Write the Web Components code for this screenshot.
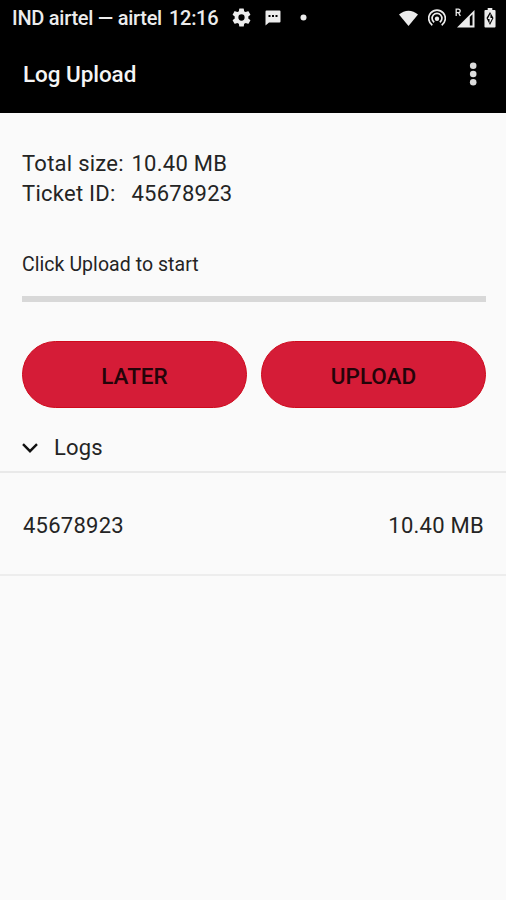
<!DOCTYPE html>
<html lang="en">
<head>
<meta charset="utf-8">
<title>Log Upload</title>
<style>
  body {
    margin: 0;
    background: #fafafa;
    color: #242424;
    font-family: Roboto, "Liberation Sans", sans-serif;
  }
</style>
</head>
<body>
<log-app></log-app>

<script>
class StatusBar extends HTMLElement {
  connectedCallback() {
    const root = this.attachShadow({ mode: 'open' });
    root.innerHTML = `
      <style>
        :host {
          display: flex;
          align-items: center;
          box-sizing: border-box;
          height: 36px;
          padding: 0 10px 1px 12px;
          background: #000;
          color: #ececec;
          font-size: 20px;
          font-weight: 500;
          line-height: 36px;
          white-space: nowrap;
        }

        .carrier { width: 157px; letter-spacing: -0.27px; }
        .time { width: 63px; letter-spacing: -0.3px; }
        svg { display: block; fill: currentColor; flex-shrink: 0; }
        .gear { margin-right: 14px; }
        .dot { margin-left: 19px; }
        .system { display: flex; align-items: center; margin-left: auto; }
        .wifi { margin-right: 10px; }
        .hotspot { margin-right: 9px; }
        .signal { margin-right: 9px; }
      </style>
      <span class="carrier">IND airtel — airtel</span>
      <span class="time">12:16</span>
      <svg class="gear" width="19" height="19" viewBox="2 2 20 20"><path d="M19.14 12.94c.04-.3.06-.61.06-.94s-.02-.64-.07-.94l2.03-1.58a.49.49 0 0 0 .12-.61l-1.92-3.32a.49.49 0 0 0-.59-.22l-2.39.96a7 7 0 0 0-1.62-.94l-.36-2.54a.48.48 0 0 0-.48-.41h-3.84a.48.48 0 0 0-.47.41l-.36 2.54c-.59.24-1.13.57-1.62.94l-2.39-.96a.48.48 0 0 0-.59.22L2.74 8.87a.48.48 0 0 0 .12.61l2.03 1.58a6 6 0 0 0 0 1.88l-2.03 1.58a.49.49 0 0 0-.12.61l1.92 3.32c.12.22.37.29.59.22l2.39-.96c.5.38 1.03.7 1.62.94l.36 2.54c.05.24.24.41.48.41h3.84c.24 0 .44-.17.47-.41l.36-2.54a7 7 0 0 0 1.62-.94l2.39.96c.22.08.47 0 .59-.22l1.92-3.32a.48.48 0 0 0-.12-.61zM12 15.3a3.3 3.3 0 1 1 0-6.6 3.3 3.3 0 0 1 0 6.6z"/></svg>
      <svg width="16" height="16" viewBox="0 0 16 16"><path fill-rule="evenodd" d="M1.500.5h13a1 1 0 0 1 1 1v10a1 1 0 0 1-1 1H4l-3.500 3V1.500a1 1 0 0 1 1-1zM3.500 5v2h2V5zM7 5v2h2V5zM10.500 5v2h2V5z"/></svg>
      <svg class="dot" width="7" height="7" viewBox="0 0 7 7"><circle cx="3.500" cy="3.500" r="3"/></svg>
      <div class="system">
        <svg class="wifi" width="19" height="16" viewBox="0 0 19 16"><path d="M0 4.500C5.500-.6 13.500-.6 19 4.500L9.500 16z"/></svg>
        <svg class="hotspot" width="18" height="18" viewBox="0.500 0 18 18"><g fill="none" stroke="currentColor" stroke-width="1.700"><path d="M4.800 16.200a8.300 8.300 0 1 1 9.400 0"/><path d="M6.700 13.300a4.900 4.900 0 1 1 5.600 0"/></g><circle cx="9.500" cy="9.800" r="2.200"/></svg>
        <svg class="signal" width="20" height="20" viewBox="0 0 20 20"><path fill="none" stroke="currentColor" stroke-width="1.300" d="M1.200 8V1.200h2.300a1.600 1.600 0 0 1 0 3.400H1.200M3.500 4.600l1.800 3.400"/><path fill-rule="evenodd" d="M19.500 2v17.500H2zM14.800 9v8.500h2.700V6.300z"/></svg>
        <svg width="12" height="20" viewBox="0 0 13 20" preserveAspectRatio="none"><path fill-rule="evenodd" d="M4 0h5v2h2.500a1 1 0 0 1 1 1v15.500a1 1 0 0 1-1 1h-10a1 1 0 0 1-1-1V3a1 1 0 0 1 1-1H4zM6.500 4L2.700 10l3.800 7 3.800-7z"/><path d="M7 5.500L4 11h2v4.500L9 10H7z"/></svg>
      </div>`;
  }
}
customElements.define('status-bar', StatusBar);

class AppBar extends HTMLElement {
  connectedCallback() {
    const root = this.attachShadow({ mode: 'open' });
    root.innerHTML = `
      <style>
        :host {
          display: flex;
          align-items: center;
          justify-content: space-between;
          box-sizing: border-box;
          height: 77px;
          padding: 0 28px 2px 23px;
          background: #000;
          color: #f5f5f5;
        }

        h1 {
          margin: 0;
          font-size: 22.500px;
          font-weight: 500;
          line-height: 30px;
          letter-spacing: -0.07px;
        }

        svg { display: block; fill: #dcdcdc; }
      </style>
      <h1><slot></slot></h1>
      <svg width="9" height="26" viewBox="0 0 9 26"><circle cx="4.200" cy="4.700" r="3.300"/><circle cx="4.200" cy="13" r="3.300"/><circle cx="4.200" cy="21.300" r="3.300"/></svg>`;
  }
}
customElements.define('app-bar', AppBar);

class UploadDetails extends HTMLElement {
  connectedCallback() {
    const root = this.attachShadow({ mode: 'open' });
    root.innerHTML = `
      <style>
        :host {
          display: block;
          padding: 36px 20px 0 22px;
        }

        dl {
          display: grid;
          grid-template-columns: 109.500px auto;
          margin: 0;
          font-size: 22px;
          line-height: 30px;
          letter-spacing: 0.26px;
          white-space: nowrap;
        }

        dd { margin: 0; }

        p {
          margin: 43px 0 0;
          font-size: 19.500px;
          line-height: 26px;
          letter-spacing: 0.05px;
        }

        .progress {
          height: 6px;
          margin-top: 18px;
          background: #d8d8d8;
        }
      </style>
      <dl>
        <dt>Total size:</dt><dd>${this.getAttribute('size')}</dd>
        <dt>Ticket ID:</dt><dd>${this.getAttribute('ticket')}</dd>
      </dl>
      <p><slot></slot></p>
      <div class="progress" role="progressbar" aria-valuenow="0"></div>`;
  }
}
customElements.define('upload-details', UploadDetails);

class PillButton extends HTMLElement {
  connectedCallback() {
    const root = this.attachShadow({ mode: 'open' });
    root.innerHTML = `
      <style>
        :host { display: block; flex: 1; }

        button {
          display: block;
          box-sizing: border-box;
          width: 100%;
          height: 67px;
          padding: 2px 0 0;
          border: 1px solid #cf0a1c;
          border-radius: 34px;
          background: #d51c37;
          color: #240409;
          font: 500 22.500px Roboto, "Liberation Sans", sans-serif;
          cursor: pointer;
        }
      </style>
      <button><slot></slot></button>`;
  }
}
customElements.define('pill-button', PillButton);

class LogSection extends HTMLElement {
  connectedCallback() {
    const root = this.attachShadow({ mode: 'open' });
    root.innerHTML = `
      <style>
        :host { display: block; }

        header {
          display: flex;
          align-items: center;
          box-sizing: border-box;
          height: 65px;
          padding: 16px 22px 0;
          border-bottom: 2px solid #e9e9e9;
          font-size: 22px;
          letter-spacing: 0.2px;
          line-height: 30px;
        }

        svg { display: block; margin-right: 16px; }
      </style>
      <header>
        <svg width="16" height="10" viewBox="0 0 16 10" fill="none" stroke="#111" stroke-width="2.400"><path d="M1 1.200L8 8.200l7-7"/></svg>
        <span>${this.getAttribute('heading')}</span>
      </header>
      <slot></slot>`;
  }
}
customElements.define('log-section', LogSection);

class LogRow extends HTMLElement {
  connectedCallback() {
    const root = this.attachShadow({ mode: 'open' });
    root.innerHTML = `
      <style>
        :host {
          display: flex;
          align-items: center;
          justify-content: space-between;
          box-sizing: border-box;
          height: 103px;
          padding: 3px 22px 0 23px;
          border-bottom: 2px solid #ededed;
          font-size: 22px;
          letter-spacing: 0.26px;
        }
      </style>
      <span>${this.getAttribute('name')}</span>
      <span>${this.getAttribute('size')}</span>`;
  }
}
customElements.define('log-row', LogRow);

class LogApp extends HTMLElement {
  connectedCallback() {
    const root = this.attachShadow({ mode: 'open' });
    root.innerHTML = `
      <style>
        :host {
          display: block;
          min-height: 900px;
        }

        .actions {
          display: flex;
          gap: 14px;
          padding: 39.400px 20px 0 22px;
        }
      </style>
      <status-bar></status-bar>
      <app-bar>Log Upload</app-bar>
      <upload-details size="10.40 MB" ticket="45678923">Click Upload to start</upload-details>
      <div class="actions">
        <pill-button>LATER</pill-button>
        <pill-button>UPLOAD</pill-button>
      </div>
      <log-section heading="Logs">
        <log-row name="45678923" size="10.40 MB"></log-row>
      </log-section>`;
  }
}
customElements.define('log-app', LogApp);
</script>
</body>
</html>
